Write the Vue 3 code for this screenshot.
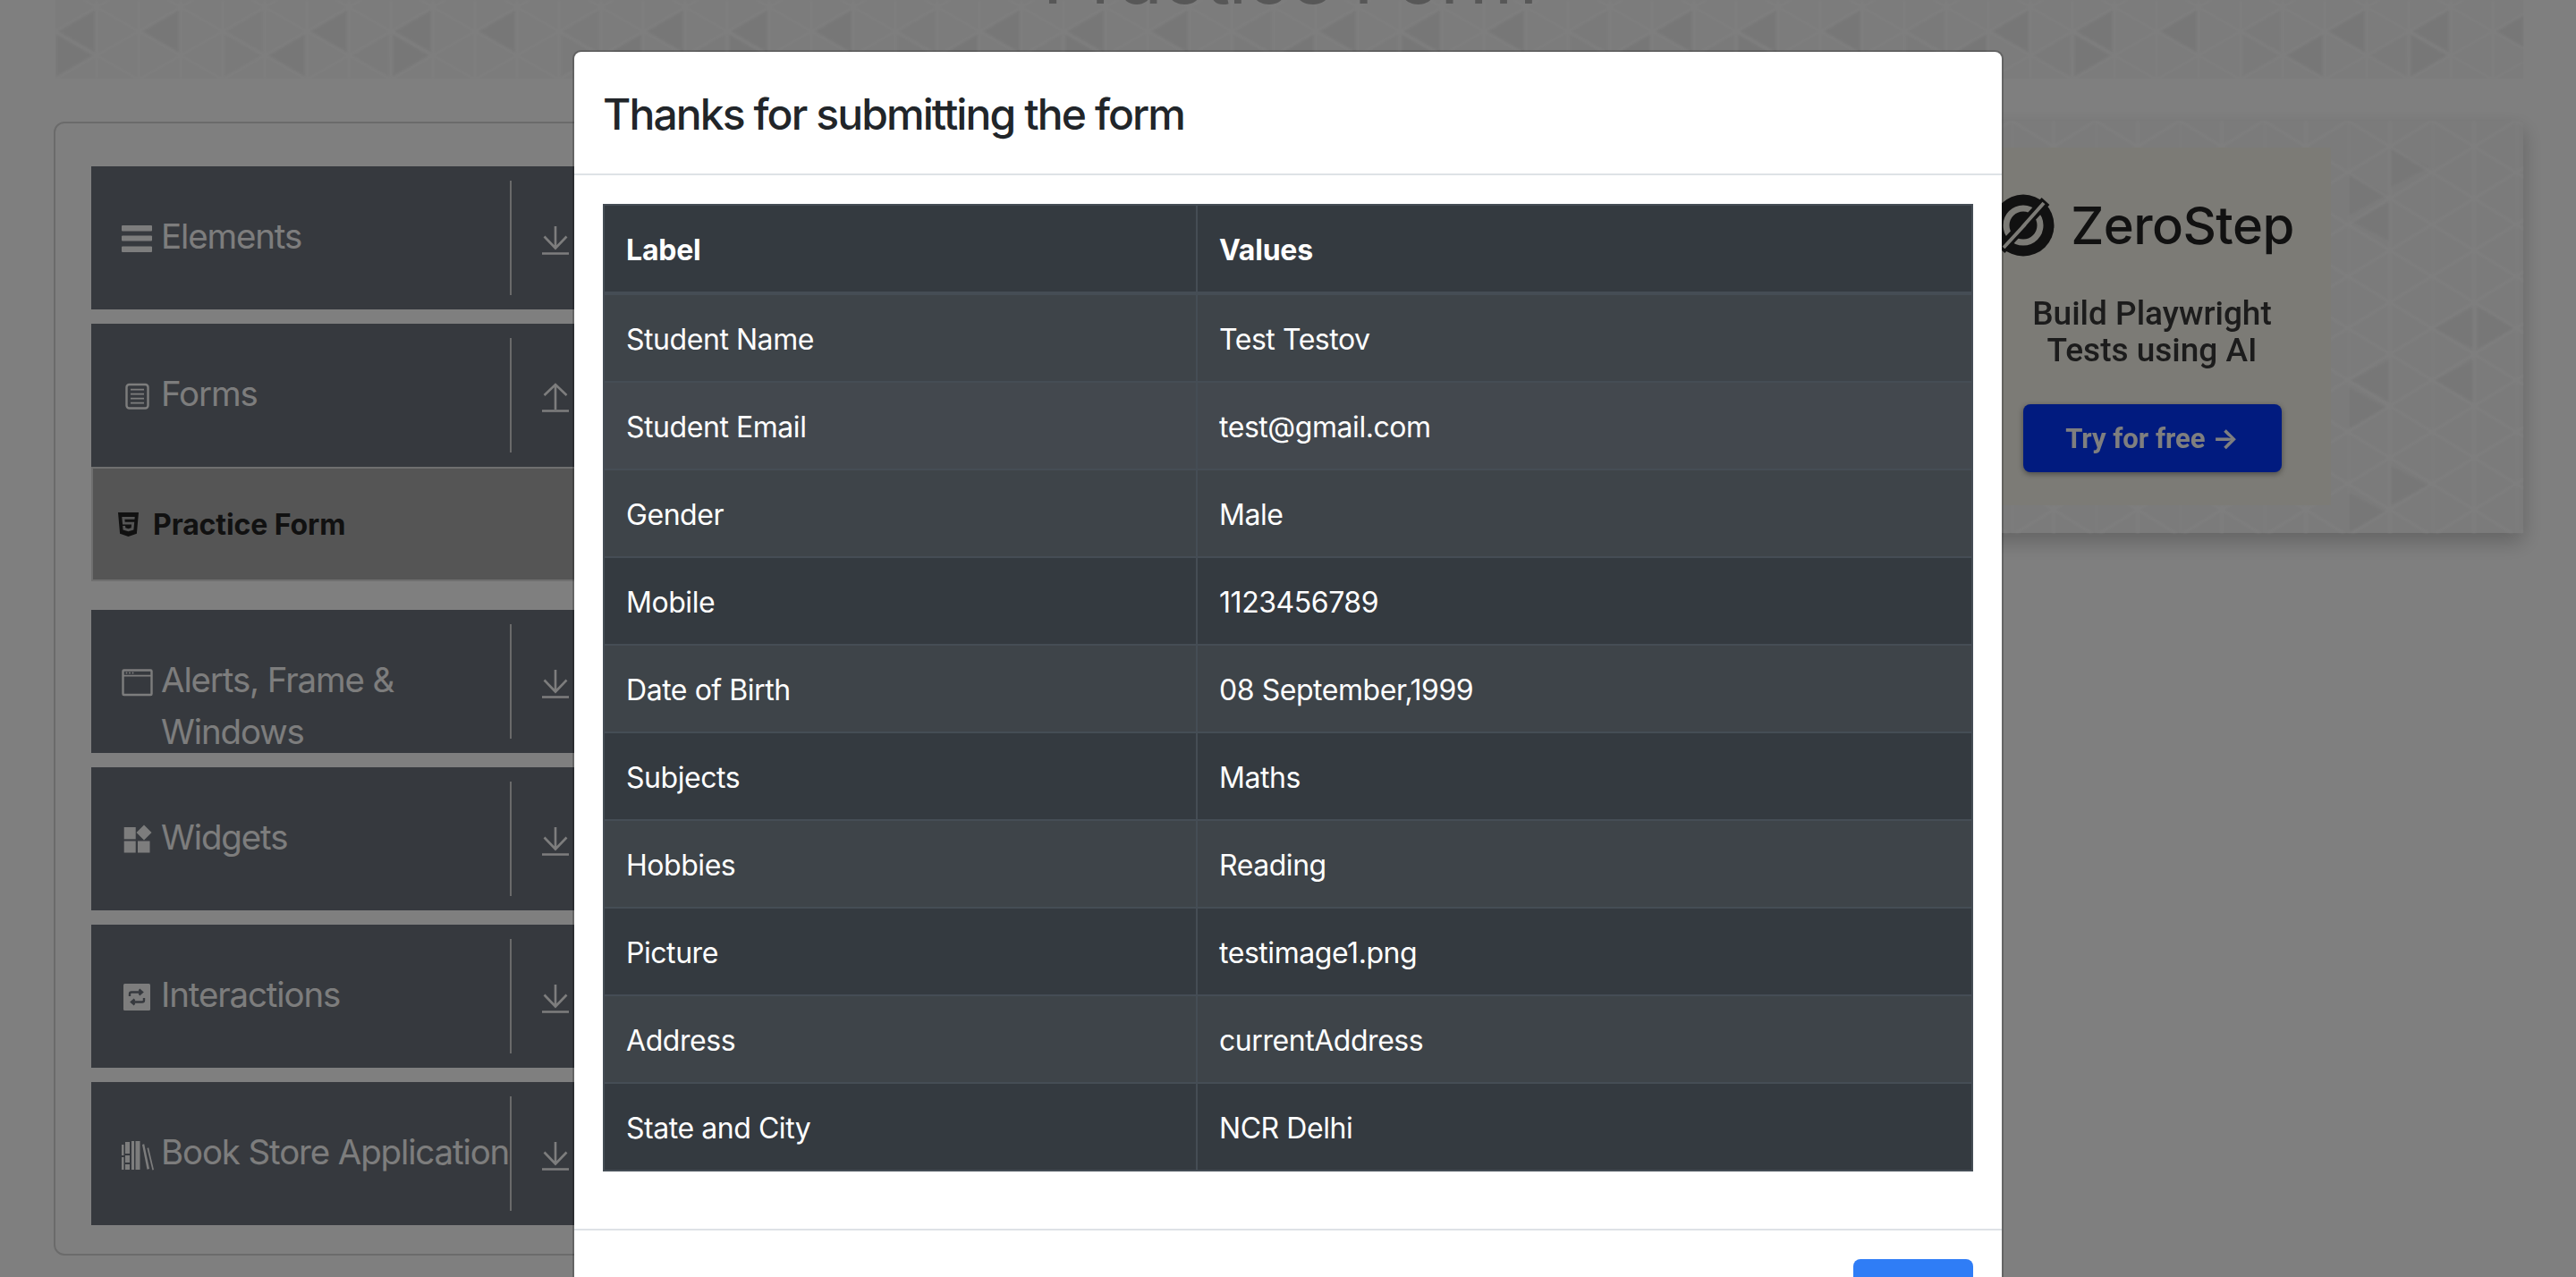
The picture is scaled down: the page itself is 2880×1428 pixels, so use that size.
<script setup>
const groupsTop = [
  { label: 'Elements', icon: 'bars', dir: 'down' },
  { label: 'Forms', icon: 'form', dir: 'up' }
]
const groupsBottom = [
  { label: 'Alerts, Frame &\nWindows', icon: 'window', dir: 'down' },
  { label: 'Widgets', icon: 'widgets', dir: 'down' },
  { label: 'Interactions', icon: 'swap', dir: 'down' },
  { label: 'Book Store Application', icon: 'books', dir: 'down' }
]
const rows = [
  ['Student Name', 'Test Testov'],
  ['Student Email', 'test@gmail.com'],
  ['Gender', 'Male'],
  ['Mobile', '1123456789'],
  ['Date of Birth', '08 September,1999'],
  ['Subjects', 'Maths'],
  ['Hobbies', 'Reading'],
  ['Picture', 'testimage1.png'],
  ['Address', 'currentAddress'],
  ['State and City', 'NCR Delhi']
]

// Triangle lattice of the header band: 47px columns, 54px sides, repeats every 8 columns.
const colX = (k) => 47 * k - 1
const nodeY = (k, j) => (k % 2 === 0 ? 35 : 8) + 54 * j
const inset = (pts, f = 0.86) => {
  const cx = (pts[0][0] + pts[1][0] + pts[2][0]) / 3
  const cy = (pts[0][1] + pts[1][1] + pts[2][1]) / 3
  return pts.map(([x, y]) => `${cx + (x - cx) * f},${cy + (y - cy) * f}`).join(' ')
}
const leftTri = (k, j) => inset([[colX(k), nodeY(k, 0)], [colX(k + 1), nodeY(k + 1, j)], [colX(k + 1), nodeY(k + 1, j + 1)]])
const rightTri = (k) => inset([[colX(k), 35], [colX(k), 89], [colX(k + 1), 62]])
const bandDark = [leftTri(0, 0), rightTri(0), leftTri(2, 0), leftTri(6, 0), inset([[colX(5), 62], [colX(6), 35], [colX(6), 89]])]
const bandFaint = [inset([[colX(7), 62], [colX(8), 35], [colX(8), 89]]), rightTri(4), leftTri(4, 0)]
const bandLines = []
for (let k = 0; k < 9; k++) {
  bandLines.push(`M${colX(k)} 0V108`)
  for (let j = -1; j < 3; j++) {
    const y = nodeY(k, j)
    const dy = 27
    bandLines.push(`M${colX(k)} ${y}L${colX(k + 1)} ${y + dy}`)
    bandLines.push(`M${colX(k)} ${y}L${colX(k + 1)} ${y - dy}`)
  }
}
const bandPath = bandLines.join('')

// Darker triangles on the advert, measured in the advert's own coordinates.
const ox = 2206
const oy = 135
const adTris = [
  [[2672, 165], [2672, 210], [2716, 187]],
  [[2625, 193], [2625, 242], [2670, 217]],
  [[2628, 247], [2672, 225], [2672, 270]],
  [[2721, 367], [2765, 343], [2765, 390]],
  [[2770, 343], [2770, 390], [2812, 367]],
  [[2628, 425], [2672, 402], [2672, 450]],
  [[2625, 432], [2625, 480], [2668, 456]],
  [[2722, 425], [2765, 402], [2765, 450]],
  [[2672, 520], [2672, 565], [2716, 543]],
  [[2625, 550], [2625, 596], [2668, 573]]
].map((t) => t.map(([x, y]) => `${x - ox},${y - oy}`).join(' '))
</script>

<template>
  <div class="page">
    <header class="band">
      <svg class="band-art" width="2759" height="88" aria-hidden="true">
        <defs>
          <pattern id="tri" width="376" height="108" patternUnits="userSpaceOnUse">
            <polygon v-for="(p, i) in bandFaint" :key="'f' + i" :points="p" class="tri-faint" />
            <polygon v-for="(p, i) in bandDark" :key="'d' + i" :points="p" class="tri-dark" />
            <path :d="bandPath" class="lattice" />
          </pattern>
        </defs>
        <rect width="2759" height="88" fill="url(#tri)" />
      </svg>
      <h1 class="title">Practice Form</h1>
    </header>

    <main class="main">
      <section class="card">
        <div v-for="g in groupsTop" :key="g.label" class="group">
          <div class="group-left">
            <svg class="gicon" viewBox="0 0 38 40" aria-hidden="true">
              <g v-if="g.icon === 'bars'">
                <rect x="2" y="4" width="34" height="6.5" rx="1" />
                <rect x="2" y="15.5" width="34" height="6" rx="1" />
                <rect x="2" y="27.5" width="34" height="6.5" rx="1" />
              </g>
              <g v-else>
                <rect x="7.5" y="6" width="24" height="26.5" rx="3" class="outline" />
                <path d="M12 11.6h15M12 16.6h15M12 21.6h15M12 26.6h15" class="thin" />
              </g>
            </svg>
            <span class="gtext">{{ g.label }}</span>
          </div>
          <i class="divider"></i>
          <svg class="arrow" viewBox="0 0 30 34" aria-hidden="true">
            <path v-if="g.dir === 'down'" d="M15 1V25M2.5 12.5L15 25.5 27.5 12.5M0 31.5H30" />
            <path v-else d="M15 30V3M2.5 14L15 2 27.5 14M0 31.5H30" />
          </svg>
        </div>

        <div class="current">
          <svg class="html5" viewBox="0 32 384 448" aria-hidden="true">
            <path d="M0 32l34.9 395.8L191.5 480l157.2-52.2L384 32H0zm308.2 127.9H124.4l4.1 49.4h175.6l-13.6 148.4-97.9 27v.3h-1.1l-98.7-27.3-6-75.8h47.7L138 320l53.5 14.5 53.7-14.5 6-62.2H84.3L71.5 112.2h241.1l-4.4 47.7z" />
          </svg>
          <span>Practice Form</span>
        </div>

        <div v-for="g in groupsBottom" :key="g.label" class="group">
          <div class="group-left">
            <svg class="gicon" viewBox="0 0 38 40" aria-hidden="true">
              <g v-if="g.icon === 'window'">
                <rect x="3.5" y="5.5" width="32" height="27.5" rx="1" class="outline" />
                <path d="M3.5 11.6H35.5" class="thin" />
                <circle cx="7.5" cy="8.6" r="1" />
                <circle cx="11" cy="8.6" r="1" />
                <circle cx="14.5" cy="8.6" r="1" />
              </g>
              <g v-else-if="g.icon === 'widgets'">
                <rect x="4.7" y="5" width="13" height="13.4" />
                <rect x="4.7" y="20.5" width="13" height="13" />
                <rect x="20" y="20.5" width="13.5" height="13" />
                <path d="M27 2.5L35.5 11 27 19.5 18.5 11Z" />
              </g>
              <g v-else-if="g.icon === 'swap'">
                <rect x="4" y="4" width="30" height="30" rx="1.5" />
                <path d="M11 18v-2.5a2 2 0 0 1 2-2h11M21.5 10.5l3.5 3-3.5 3M27 20v2.5a2 2 0 0 1-2 2H14M16.5 21.5l-3.5 3 3.5 3" class="cut" />
              </g>
              <g v-else>
                <path d="M2 8h2.5v12H2zM2 22h2.5v14H2zM6 5h5v13H6zM6 20h5v8H6zM6 30h5v6H6zM13 4h3v32h-3zM17.5 4h5v32h-5z" />
                <path d="M25 8l2.2-.8L33 35l-2.5.8z" />
                <path d="M30.5 12l1.6-.8L38 36l-1.6.6z" />
              </g>
            </svg>
            <span class="gtext">{{ g.label }}</span>
          </div>
          <i class="divider"></i>
          <svg class="arrow" viewBox="0 0 30 34" aria-hidden="true">
            <path d="M15 1V25M2.5 12.5L15 25.5 27.5 12.5M0 31.5H30" />
          </svg>
        </div>
      </section>

      <aside class="ad">
        <svg class="ad-art" width="615" height="461" aria-hidden="true">
          <defs>
            <pattern id="adtri" x="43" y="0" width="94" height="58" patternUnits="userSpaceOnUse">
              <path d="M0 0V58M47 0V58M0 0L47 29 94 0M0 58L47 29 94 58" class="lattice" />
            </pattern>
          </defs>
          <polygon v-for="(p, i) in adTris" :key="i" :points="p" class="tri-dark" />
          <rect width="615" height="461" fill="url(#adtri)" />
        </svg>
        <div class="ad-panel">
          <div class="ad-brand">
            <svg class="ad-logo" viewBox="0 0 70 70" aria-hidden="true">
              <circle cx="35" cy="35" r="34.5" fill="#232323" />
              <circle cx="35" cy="35" r="19" fill="none" stroke="#f8f6ec" stroke-width="7" />
              <circle cx="35" cy="35" r="11" fill="#232323" />
              <path d="M10 62L60 8" stroke="#232323" stroke-width="12" />
              <path d="M13 60L37 34M34 37L58 10" stroke="#f8f6ec" stroke-width="4" fill="none" />
            </svg>
            <span class="ad-name">ZeroStep</span>
          </div>
          <p class="ad-copy">Build Playwright<br />Tests using AI</p>
          <span class="ad-btn">Try for free →</span>
        </div>
      </aside>
    </main>

    <div class="backdrop"></div>

    <div class="modal" role="dialog">
      <div class="modal-head">
        <div class="modal-title">Thanks for submitting the form</div>
      </div>
      <div class="modal-body">
        <table class="tbl">
          <colgroup>
            <col class="col-label" />
            <col />
          </colgroup>
          <thead>
            <tr>
              <th>Label</th>
              <th>Values</th>
            </tr>
          </thead>
          <tbody>
            <tr v-for="(r, i) in rows" :key="r[0]" :class="{ odd: i % 2 === 0, hover: i === 1 }">
              <td>{{ r[0] }}</td>
              <td>{{ r[1] }}</td>
            </tr>
          </tbody>
        </table>
      </div>
      <div class="modal-foot">
        <button class="close" type="button">Close</button>
      </div>
    </div>
  </div>
</template>

<style>
html,
body {
  margin: 0;
  height: 100%;
  overflow: hidden;
  background: #fff;
}
</style>

<style scoped>
.page {
  position: relative;
  height: 1428px;
  overflow: hidden;
  background: #fff;
  font-family: Inter, "Liberation Sans", sans-serif;
}
.band {
  position: relative;
  height: 88px;
  margin: 0 59px 0 62px;
  background: #f8f8f8;
  display: flex;
  justify-content: center;
  align-items: flex-end;
  overflow: visible;
}
.band-art {
  position: absolute;
  left: 0;
  top: 0;
  filter: blur(1px);
}
.tri-dark {
  fill: #efefef;
}
.tri-faint {
  fill: #f4f4f4;
}
.lattice {
  fill: none;
  stroke: #fff;
  stroke-opacity: 0.7;
  stroke-width: 3;
}
.title {
  position: relative;
  margin: 0 0 72px;
  font-size: 88px;
  line-height: 88px;
  font-weight: 400;
  letter-spacing: -2px;
  color: #aeaeae;
  white-space: nowrap;
}
.main {
  display: flex;
  justify-content: space-between;
  padding: 0 59px 0 60px;
}
.card {
  width: 700px;
  height: 1268px;
  box-sizing: border-box;
  margin-top: 48px;
  padding: 48px 40px 32px;
  border: 2px solid #d6d6d6;
  border-radius: 12px;
}
.group {
  display: flex;
  height: 160px;
  margin-bottom: 16px;
  overflow: hidden;
  background: #6c727c;
  color: #fbfbfb;
}
.group-left {
  width: 468px;
  flex: none;
  box-sizing: border-box;
  display: flex;
  padding: 50px 0 0 32px;
}
.gicon {
  flex: none;
  width: 38px;
  height: 40px;
  margin: 12px 8px 0 0;
  fill: #fbfbfb;
}
.outline {
  fill: none;
  stroke: #fbfbfb;
  stroke-width: 2.4;
}
.thin {
  fill: none;
  stroke: #fbfbfb;
  stroke-width: 1.8;
}
.cut {
  fill: none;
  stroke: #6c727c;
  stroke-width: 2.4;
}
.gtext {
  font-size: 38.4px;
  line-height: 57.6px;
  font-weight: 400;
  letter-spacing: -1.1px;
  white-space: pre;
}
.divider {
  flex: none;
  width: 2px;
  margin: 16px 0;
  background: #d4d4d4;
}
.arrow {
  flex: none;
  width: 30px;
  height: 34px;
  margin: 66px 0 0 34px;
  fill: none;
  stroke: #fbfbfb;
  stroke-width: 2.6;
}
.current {
  display: flex;
  align-items: center;
  gap: 16px;
  box-sizing: border-box;
  height: 128px;
  margin: -16px 0 32px;
  padding-left: 28px;
  border: 2px solid #dedede;
  background: #aaa;
  color: #222;
  font-size: 32px;
  font-weight: 700;
  letter-spacing: -0.1px;
}
.html5 {
  width: 23px;
  height: 27px;
  fill: #222;
}
.ad {
  position: relative;
  box-sizing: border-box;
  width: 615px;
  height: 461px;
  margin-top: 47px;
  padding-top: 30px;
  background: #f7f7f7;
  box-shadow: 0 10px 22px rgba(0, 0, 0, 0.22);
}
.ad-art {
  position: absolute;
  left: 0;
  top: 0;
  filter: blur(1px);
}
.ad-panel {
  position: relative;
  width: 400px;
  height: 400px;
  box-sizing: border-box;
  padding-top: 52px;
  background: #f8f6ec;
  display: flex;
  flex-direction: column;
  align-items: center;
  filter: blur(0.6px);
  font-family: Roboto, Inter, sans-serif;
}
.ad-brand {
  display: flex;
  align-items: center;
  gap: 18px;
  height: 70px;
  margin-left: -20px;
  color: #222;
}
.ad-logo {
  width: 70px;
  height: 70px;
  flex: none;
}
.ad-name {
  font-family: Inter, sans-serif;
  font-size: 58px;
  font-weight: 500;
  letter-spacing: -0.6px;
}
.ad-copy {
  margin: 43px 0 0;
  font-size: 37px;
  line-height: 41px;
  font-weight: 500;
  color: #383838;
  text-align: center;
}
.ad-btn {
  display: flex;
  align-items: center;
  justify-content: center;
  width: 289px;
  height: 76px;
  margin-top: 40px;
  border-radius: 8px;
  background: #0236ff;
  box-shadow: 0 2px 6px rgba(0, 0, 0, 0.4);
  color: #fff;
  font-size: 31px;
  font-weight: 700;
}
.backdrop {
  position: absolute;
  inset: 0;
  background: rgba(0, 0, 0, 0.5);
}
.modal {
  position: absolute;
  left: 640px;
  top: 56px;
  width: 1600px;
  box-sizing: border-box;
  border: 2px solid rgba(0, 0, 0, 0.2);
  border-radius: 9.6px;
  background: #fff;
  background-clip: padding-box;
  color: #212529;
}
.modal-head {
  padding: 34px 32px 30px;
  border-bottom: 2px solid #dee2e6;
}
.modal-title {
  font-size: 48px;
  line-height: 72px;
  font-weight: 500;
  letter-spacing: -1.9px;
}
.modal-body {
  padding: 32px 32px 0;
}
.tbl {
  width: 100%;
  table-layout: fixed;
  border-collapse: collapse;
  margin-bottom: 64px;
  background: #343a40;
  color: #fff;
  font-size: 32px;
  line-height: 48px;
}
.col-label {
  width: 663px;
}
.tbl th,
.tbl td {
  padding: 26px 24px 22px;
  border: 2px solid #454d55;
  text-align: left;
}
.tbl th {
  font-weight: 700;
  letter-spacing: -0.2px;
  border-bottom-width: 4px;
}
.tbl td {
  font-weight: 400;
  letter-spacing: -0.45px;
}
.tbl tr.odd {
  background: rgba(255, 255, 255, 0.05);
}
.tbl tr.hover {
  background: rgba(255, 255, 255, 0.075);
}
.modal-foot {
  display: flex;
  justify-content: flex-end;
  padding: 32px;
  border-top: 2px solid #dee2e6;
}
.close {
  width: 134px;
  height: 76px;
  border: 0;
  border-radius: 8px;
  background: #2f7df6;
  color: #fff;
  font-family: inherit;
  font-size: 32px;
}
</style>
